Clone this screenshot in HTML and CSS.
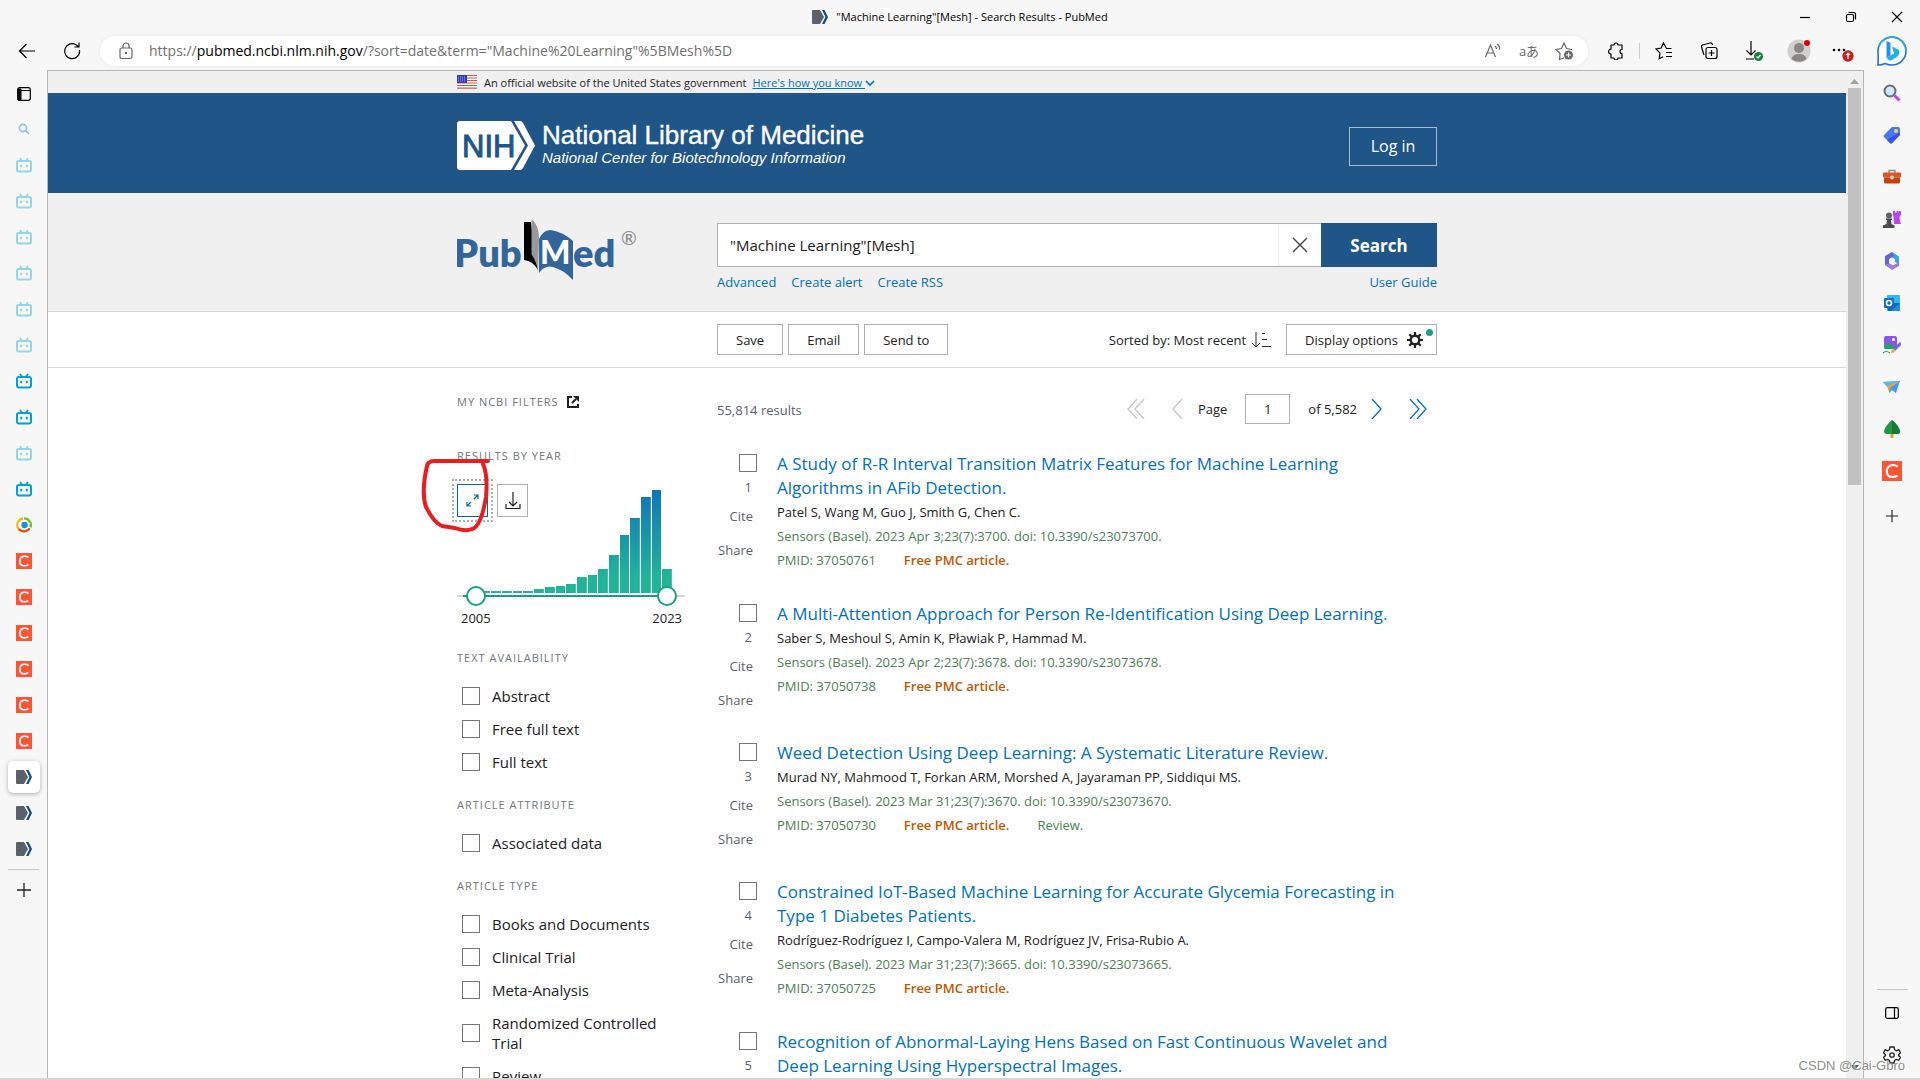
FILE: index.html
```html
<!DOCTYPE html>
<html lang="en">
  <head>
    <meta charset="UTF-8" />
    <meta name="viewport" content="width=device-width, initial-scale=1.0" />
    <title>"Machine Learning"[Mesh] - Search Results - PubMed</title>
    <link rel="stylesheet" href="styles.css">
  </head>
  <body>
    <!-- shared icons -->
    <svg class="sprite" aria-hidden="true">
      <symbol id="tv" viewBox="0 0 16 16">
        <rect x="1" y="4" width="14" height="10.5" rx="2" fill="none" stroke="currentColor" stroke-width="2" />
        <path d="M4 1l2 2.5M12 1l-2 2.5" stroke="currentColor" stroke-width="1.8" />
        <path d="M5.2 7.8v2.4M10.8 7.8v2.4" stroke="currentColor" stroke-width="2" />
      </symbol>
      <symbol id="ncbi" viewBox="0 0 16 14">
        <path d="M1 0h7l4 7-4 7H1a1 1 0 0 1-1-1V1a1 1 0 0 1 1-1z" fill="#5b616b" />
        <path d="M8.500 0h1.500l3.500 7-3.500 7H8.500l4-7z" fill="#fff" />
        <path d="M10 0h2.500L16 7l-3.500 7H10l3.500-7z" fill="#0b4d8c" />
      </symbol>
      <symbol id="csdn" viewBox="0 0 16 16">
        <rect width="16" height="16" fill="#fc5531" />
        <path d="M12.500 4.500Q11 3.200 8.800 3.200C5.500 3.200 3.800 5.500 3.800 8.200c0 2.800 1.800 4.600 4.600 4.600q2 0 4-1" fill="none" stroke="#fff" stroke-width="1.700" />
      </symbol>
      <symbol id="plus" viewBox="0 0 16 16">
        <path d="M8 1v14M1 8h14" stroke="currentColor" stroke-width="1.300" />
      </symbol>
    </svg>

    <div class="titlebar">
      <div class="window-title">
        <svg width="16" height="14"><use href="#ncbi" /></svg>
        <span>"Machine Learning"[Mesh] - Search Results - PubMed</span>
      </div>
      <div class="window-controls">
        <button aria-label="Minimize"><svg width="12" height="12" viewBox="0 0 12 12"><path d="M1 6.500h10" /></svg></button>
        <button aria-label="Restore"><svg width="12" height="12" viewBox="0 0 12 12"><rect x="1.500" y="3.500" width="7" height="7" rx="1.500" /><path d="M3.500 1.500h5a2 2 0 0 1 2 2v5" /></svg></button>
        <button aria-label="Close"><svg width="12" height="12" viewBox="0 0 12 12"><path d="M1 1l10 10M11 1L1 11" /></svg></button>
      </div>
    </div>

    <div class="toolbar">
      <button aria-label="Back"><svg width="18" height="18" viewBox="0 0 18 18"><path d="M17 9H1.500M8.500 2l-7 7 7 7" /></svg></button>
      <button aria-label="Refresh"><svg width="18" height="18" viewBox="0 0 18 18"><path d="M16.500 8A7.500 7.500 0 1 1 13 2.800l2.500 2M16 .500V5h-4.500" /></svg></button>
      <div class="address">
        <svg class="soft" width="16" height="18" viewBox="0 0 16 18"><rect x="2" y="6" width="12" height="10.500" rx="1.500" /><path d="M5 6V4a3 3 0 0 1 6 0v2" /><circle cx="8" cy="11" r=".6" /></svg>
        <span class="url">https://<b>pubmed.ncbi.nlm.nih.gov</b>/?sort=date&amp;term="Machine%20Learning"%5BMesh%5D</span>
        <button class="soft" aria-label="Read aloud"><svg width="18" height="16" viewBox="0 0 18 16"><path d="M1.500 14L6.500 2l5 12M3.200 10h6.600M11 3q1.500 1 1.500 3M13 1q3 2 2.500 5.500" /></svg></button>
        <button class="soft kana" aria-label="Translate">aあ</button>
        <button class="soft" aria-label="Add to favorites"><svg width="20" height="20" viewBox="0 0 20 20"><path d="M9 17l-4.500 1.500.600-6L1 8.500l5.500-1L9 2l2.500 5.500 5.500 1" /><circle cx="13.500" cy="14" r="4.500" fill="#666" stroke="none" /><path d="M13.500 11.500v5M11 14h5" stroke="#fff" /></svg></button>
      </div>
      <button aria-label="Extensions"><svg width="18" height="18" viewBox="0 0 18 18"><path d="M4 3h3a2 2 0 0 1 4 0h4v4.500a2 2 0 0 0 0 4V16h-4a2 2 0 0 1-4 0H4v-4a2.300 2.300 0 0 1 0-4.800z" stroke-linejoin="round" /></svg></button>
      <span class="separator"></span>
      <button aria-label="Favorites"><svg width="18" height="18" viewBox="0 0 18 18"><path d="M16.500 6.500h-5L8.500 1l-2.300 5L1 7l4 4-.800 5.800 4-2M11 10.500h6M11 14.500h6" /></svg></button>
      <button aria-label="Collections"><svg width="18" height="18" viewBox="0 0 18 18"><rect x="6" y="5.500" width="11" height="11" rx="2" /><path d="M11.500 8v6M8.500 11h6M4 13L1.500 5Q1 3.500 2.500 3L10 1q2-.500 2.500 2" /></svg></button>
      <button aria-label="Downloads"><svg width="20" height="22" viewBox="0 0 20 22"><path d="M7 1v14M2.500 10.500L7 15l4.500-4.500M2 19h8" /><circle cx="14.500" cy="16.500" r="4.500" fill="#158136" stroke="none" /><path d="M12.500 16.500l1.500 1.500 2.500-3" stroke="#fff" /></svg></button>
      <button aria-label="Profile"><svg width="24" height="24" viewBox="0 0 24 24"><circle cx="12" cy="12" r="11.500" fill="#d2d0ce" stroke="none" /><circle cx="12" cy="9" r="5" fill="#8a8683" stroke="none" /><path d="M4.500 20q1-5 7.500-5t7.500 5a11.500 11.500 0 0 1-15 0z" fill="#8a8683" stroke="none" /><circle cx="20" cy="4" r="3" fill="#e00000" stroke="none" /></svg></button>
      <button aria-label="Settings and more"><svg width="26" height="24" viewBox="0 0 26 24"><g fill="#000" stroke="none"><circle cx="3" cy="11" r="1.300" /><circle cx="8" cy="11" r="1.300" /><circle cx="13" cy="11" r="1.300" /></g><circle cx="17" cy="17" r="5.700" fill="#c42020" stroke="none" /><path d="M17 20v-6M15 16l2-2 2 2" stroke="#fff" /></svg></button>
      <button class="bing" aria-label="Discover"><svg width="32" height="32" viewBox="0 0 32 32">
        <path d="M2 30Q2.500 24 2 16A14 14 0 1 1 16 30Q12 30 9 28.500Q6 30 2 30z" fill="#fff" stroke="#2870dc" stroke-width="1.600" />
        <path d="M3 11A14 14 0 0 1 30 16" stroke="#2ba5e8" stroke-width="1.600" />
        <path d="M10.500 6l4 1.800v12.500l-4 2.500z" fill="#2b8df0" stroke="none" />
        <path d="M16 11.500l7 3.500q1.500 5-3 7.500l-5 3q-3 0-4.500-3l7.500-4z" fill="#21b0ea" stroke="none" />
      </svg></button>
    </div>

    <div class="workspace">
      <nav class="tabs" aria-label="Tabs">
        <button class="first" aria-label="Tab actions"><svg width="14" height="14" viewBox="0 0 14 14"><rect x=".7" y=".7" width="12.600" height="12.600" rx="2" fill="none" stroke="#000" stroke-width="1.200" /><path d="M1 2h3v11H1zM1 3.500h12" stroke="#000" /></svg></button>
        <button aria-label="Search tab"><svg width="12" height="12" viewBox="0 0 12 12" fill="none" stroke="#8fbfe2" stroke-width="1.600"><circle cx="5" cy="5" r="3.600" /><path d="M7.600 7.600L11 11" /></svg></button>
        <button class="tv pale" aria-label="Video"><svg width="16" height="16"><use href="#tv" /></svg></button>
        <button class="tv pale" aria-label="Video"><svg width="16" height="16"><use href="#tv" /></svg></button>
        <button class="tv pale" aria-label="Video"><svg width="16" height="16"><use href="#tv" /></svg></button>
        <button class="tv pale" aria-label="Video"><svg width="16" height="16"><use href="#tv" /></svg></button>
        <button class="tv pale" aria-label="Video"><svg width="16" height="16"><use href="#tv" /></svg></button>
        <button class="tv pale" aria-label="Video"><svg width="16" height="16"><use href="#tv" /></svg></button>
        <button class="tv" aria-label="Video"><svg width="16" height="16"><use href="#tv" /></svg></button>
        <button class="tv" aria-label="Video"><svg width="16" height="16"><use href="#tv" /></svg></button>
        <button class="tv pale" aria-label="Video"><svg width="16" height="16"><use href="#tv" /></svg></button>
        <button class="tv" aria-label="Video"><svg width="16" height="16"><use href="#tv" /></svg></button>
        <button aria-label="Browser page"><svg width="16" height="16" viewBox="0 0 16 16" fill="none" stroke-width="2.200"><circle cx="8" cy="8" r="7" fill="#fff" /><path d="M3 12.500A6.800 6.800 0 0 1 7 1.300" stroke="#fbb40c" /><path d="M8 1.300a6.800 6.800 0 0 1 6.500 9" stroke="#6fbe1e" /><path d="M2.500 12.200q6 4.500 11.500-.700" stroke="#f4430d" /><circle cx="8.500" cy="8" r="3.200" fill="#1e8fe0" /></svg></button>
        <button aria-label="CSDN"><svg width="16" height="16"><use href="#csdn" /></svg></button>
        <button aria-label="CSDN"><svg width="16" height="16"><use href="#csdn" /></svg></button>
        <button aria-label="CSDN"><svg width="16" height="16"><use href="#csdn" /></svg></button>
        <button aria-label="CSDN"><svg width="16" height="16"><use href="#csdn" /></svg></button>
        <button aria-label="CSDN"><svg width="16" height="16"><use href="#csdn" /></svg></button>
        <button aria-label="CSDN"><svg width="16" height="16"><use href="#csdn" /></svg></button>
        <button class="active" aria-label="PubMed"><svg width="16" height="14"><use href="#ncbi" /></svg></button>
        <button aria-label="PubMed"><svg width="16" height="14"><use href="#ncbi" /></svg></button>
        <button aria-label="PubMed"><svg width="16" height="14"><use href="#ncbi" /></svg></button>
        <span class="rule"></span>
        <button aria-label="New tab"><svg width="16" height="16"><use href="#plus" /></svg></button>
      </nav>

      <div class="page">
        <div class="gov-banner">
          <div class="container">
            <svg width="20" height="14" viewBox="0 0 20 14"><rect width="20" height="14" fill="#fff" /><path d="M0 .500h20M0 3h20M0 5.500h20M0 8h20M0 10.500h20M0 13.200h20" stroke="#e0523f" stroke-width="1.200" /><rect width="10" height="8" fill="#2a3bb5" /><path d="M1 2h8M1 4h8M1 6h8" stroke="#aab3ea" stroke-dasharray="1 1" /></svg>
            <span>An official website of the United States government</span>
            <a href="#">Here's how you know <svg width="10" height="7" viewBox="0 0 10 7"><path d="M1 1l4 4 4-4" fill="none" stroke="#0071bc" stroke-width="1.600" /></svg></a>
          </div>
        </div>

        <header class="nlm">
          <div class="container">
            <a class="nlm-logo" href="#">
              <svg width="78" height="49" viewBox="0 0 78 49">
                <path d="M3 0h51l14 24.500L54 49H3a3 3 0 0 1-3-3V3a3 3 0 0 1 3-3z" fill="#fff" />
                <path d="M57 0h6q2 0 3 2l12 22.500L66 47q-1 2-3 2h-6l14-24.500z" fill="#fff" />
                <text x="5" y="36">NIH</text>
              </svg>
              <span>
                <strong>National Library of Medicine</strong>
                <em>National Center for Biotechnology Information</em>
              </span>
            </a>
            <button class="login">Log in</button>
          </div>
        </header>

        <section class="search">
          <div class="container">
            <a class="pubmed-logo" href="#" aria-label="PubMed">
              <svg width="182" height="62" viewBox="0 0 182 62">
                <path d="M67 3h7l4 34 3 14q-5-9-14-10z" fill="#000" />
                <path d="M74.500 0Q82 6 82 19l-1 36q0-10-6.500-20z" fill="#999" />
                <path d="M82 20q4-9 12-9 12 2 22 11v39q-9-10-20-13-8-2-14 6z" fill="#326599" />
                <text class="word" x="-3" y="48">Pub</text>
                <text class="word" x="116" y="48">ed</text>
                <text class="m" x="83" y="45">M</text>
                <text class="reg" x="164" y="26">®</text>
              </svg>
            </a>
            <form class="search-form">
              <div class="search-row">
                <input type="text" aria-label="Search term" value="&quot;Machine Learning&quot;[Mesh]">
                <button type="button" class="clear" aria-label="Clear"><svg width="18" height="18" viewBox="0 0 18 18"><path d="M2 2l14 14M16 2L2 16" stroke="#444" stroke-width="1.400" /></svg></button>
                <button type="button" class="submit">Search</button>
              </div>
              <div class="search-links">
                <a href="#">Advanced</a>
                <a href="#">Create alert</a>
                <a href="#">Create RSS</a>
                <a class="guide" href="#">User Guide</a>
              </div>
            </form>
          </div>
        </section>

        <section class="actions">
          <div class="container">
            <button>Save</button>
            <button>Email</button>
            <button>Send to</button>
            <span class="sorted">Sorted by: Most recent
              <svg width="20" height="18" viewBox="0 0 20 18" fill="none" stroke="#333"><path d="M5 1v15M1 12l4 4 4-4M11 2.500h3M11 8.500h5M11 15.500h9" /></svg>
            </span>
            <button class="display">Display options
              <svg width="16" height="16" viewBox="0 0 16 16"><circle cx="8" cy="8" r="4.300" fill="none" stroke="#212121" stroke-width="2.400" /><path d="M8 0v4M8 12v4M0 8h4M12 8h4M2.300 2.300l2.800 2.800M10.900 10.900l2.800 2.800M2.300 13.700l2.800-2.800M10.900 5.100l2.800-2.800" stroke="#212121" stroke-width="2.200" /></svg>
              <i class="dot"></i>
            </button>
          </div>
        </section>

        <main class="container content">
          <aside>
            <h3 class="my-filters">My NCBI Filters <svg width="12" height="12" viewBox="0 0 12 12" fill="none" stroke="#212121" stroke-width="2"><path d="M5 1H1v10h10V8" /><path d="M5 7l4-4" /><path d="M6 0h6v6z" fill="#212121" stroke="none" /></svg></h3>

            <h3>Results by year</h3>
            <div class="timeline">
              <div class="chart">
                <div class="bars">
                  <i style="height:2px"></i>
                  <i style="height:2px"></i>
                  <i style="height:2px"></i>
                  <i style="height:2px"></i>
                  <i style="height:2px"></i>
                  <i style="height:2px"></i>
                  <i style="height:4px"></i>
                  <i style="height:6px"></i>
                  <i style="height:7px"></i>
                  <i style="height:9px"></i>
                  <i style="height:16px"></i>
                  <i style="height:18px"></i>
                  <i style="height:24px"></i>
                  <i style="height:38px"></i>
                  <i style="height:58px"></i>
                  <i style="height:75px"></i>
                  <i style="height:96px"></i>
                  <i style="height:103px"></i>
                  <i style="height:24px"></i>
                </div>
                <div class="chart-buttons">
                  <button class="expand" aria-label="Expand chart"><svg width="13" height="13" viewBox="0 0 13 13"><path d="M8 1h4v4M12 1L8 5M1 8v4h4M1 12l4-4" /></svg></button>
                  <button aria-label="Download CSV"><svg width="16" height="18" viewBox="0 0 16 18"><path d="M8 0v14M4 10l4 4 4-4M1 12v4.500h14V12" /></svg></button>
                </div>
              </div>
              <div class="slider">
                <input type="range" min="2005" max="2023" value="2005" aria-label="From year">
                <input type="range" min="2005" max="2023" value="2023" aria-label="To year">
              </div>
              <div class="years"><span>2005</span><span>2023</span></div>
              <svg class="scribble" width="76" height="84" viewBox="0 0 76 84"><path d="M71 10H17Q11 10 10 15Q4 42 9 56Q17 72 25 75L38 77Q48 81 55 78Q64 76 69 46Q71 24 66 13" /></svg>
            </div>

            <h3>Text availability</h3>
            <label><input type="checkbox"> Abstract</label>
            <label><input type="checkbox"> Free full text</label>
            <label><input type="checkbox"> Full text</label>

            <h3>Article attribute</h3>
            <label><input type="checkbox"> Associated data</label>

            <h3>Article type</h3>
            <label><input type="checkbox"> Books and Documents</label>
            <label><input type="checkbox"> Clinical Trial</label>
            <label><input type="checkbox"> Meta-Analysis</label>
            <label><input type="checkbox"> Randomized Controlled Trial</label>
            <label><input type="checkbox"> Review</label>
          </aside>

          <div class="results">
            <div class="results-top">
              <span class="count">55,814 results</span>
              <div class="pager">
                <button class="off" aria-label="First page" disabled><svg width="18" height="20" viewBox="0 0 18 20"><path d="M10 0L1 10l9 10M17 0L8 10l9 10" /></svg></button>
                <button class="off prev" aria-label="Previous page" disabled><svg width="12" height="20" viewBox="0 0 12 20"><path d="M11 0L2 10l9 10" /></svg></button>
                <label for="page-number">Page</label>
                <input id="page-number" type="text" value="1">
                <span>of 5,582</span>
                <button aria-label="Next page"><svg width="12" height="20" viewBox="0 0 12 20"><path d="M1 0l9 10-9 10" /></svg></button>
                <button class="last" aria-label="Last page"><svg width="18" height="20" viewBox="0 0 18 20"><path d="M1 0l9 10-9 10M8 0l9 10-9 10" /></svg></button>
              </div>
            </div>

            <article>
              <div class="tools">
                <input type="checkbox" aria-label="Select result 1">
                <span class="num">1</span>
                <button>Cite</button>
                <button>Share</button>
              </div>
              <div class="citation">
                <a class="title" href="#">A Study of R-R Interval Transition Matrix Features for Machine Learning Algorithms in AFib Detection.</a>
                <p class="authors">Patel S, Wang M, Guo J, Smith G, Chen C.</p>
                <p>Sensors (Basel). 2023 Apr 3;23(7):3700. doi: 10.3390/s23073700.</p>
                <p class="meta"><span>PMID: 37050761</span><b>Free PMC article.</b></p>
              </div>
            </article>

            <article>
              <div class="tools">
                <input type="checkbox" aria-label="Select result 2">
                <span class="num">2</span>
                <button>Cite</button>
                <button>Share</button>
              </div>
              <div class="citation">
                <a class="title" href="#">A Multi-Attention Approach for Person Re-Identification Using Deep Learning.</a>
                <p class="authors">Saber S, Meshoul S, Amin K, Pławiak P, Hammad M.</p>
                <p>Sensors (Basel). 2023 Apr 2;23(7):3678. doi: 10.3390/s23073678.</p>
                <p class="meta"><span>PMID: 37050738</span><b>Free PMC article.</b></p>
              </div>
            </article>

            <article>
              <div class="tools">
                <input type="checkbox" aria-label="Select result 3">
                <span class="num">3</span>
                <button>Cite</button>
                <button>Share</button>
              </div>
              <div class="citation">
                <a class="title" href="#">Weed Detection Using Deep Learning: A Systematic Literature Review.</a>
                <p class="authors">Murad NY, Mahmood T, Forkan ARM, Morshed A, Jayaraman PP, Siddiqui MS.</p>
                <p>Sensors (Basel). 2023 Mar 31;23(7):3670. doi: 10.3390/s23073670.</p>
                <p class="meta"><span>PMID: 37050730</span><b>Free PMC article.</b><span>Review.</span></p>
              </div>
            </article>

            <article>
              <div class="tools">
                <input type="checkbox" aria-label="Select result 4">
                <span class="num">4</span>
                <button>Cite</button>
                <button>Share</button>
              </div>
              <div class="citation">
                <a class="title" href="#">Constrained IoT-Based Machine Learning for Accurate Glycemia Forecasting in Type 1 Diabetes Patients.</a>
                <p class="authors">Rodríguez-Rodríguez I, Campo-Valera M, Rodríguez JV, Frisa-Rubio A.</p>
                <p>Sensors (Basel). 2023 Mar 31;23(7):3665. doi: 10.3390/s23073665.</p>
                <p class="meta"><span>PMID: 37050725</span><b>Free PMC article.</b></p>
              </div>
            </article>

            <article>
              <div class="tools">
                <input type="checkbox" aria-label="Select result 5">
                <span class="num">5</span>
              </div>
              <div class="citation">
                <a class="title" href="#">Recognition of Abnormal-Laying Hens Based on Fast Continuous Wavelet and Deep Learning Using Hyperspectral Images.</a>
              </div>
            </article>
          </div>
        </main>
      </div>

      <div class="scrollbar">
        <svg width="9" height="6" viewBox="0 0 9 6"><path d="M0 6l4.500-5L9 6z" fill="#a3a3a3" /></svg>
        <span class="thumb"></span>
        <svg class="down" width="9" height="6" viewBox="0 0 9 6"><path d="M0 0l4.500 5L9 0z" fill="#505050" /></svg>
      </div>

      <nav class="edge-bar" aria-label="Sidebar">
        <button aria-label="Search"><svg width="18" height="18" viewBox="0 0 18 18"><circle cx="7" cy="7" r="5.500" fill="#cfeafc" stroke="#6a6a6a" stroke-width="2" /><path d="M11.500 11.500l5 5" stroke="#c13df0" stroke-width="3" /></svg></button>
        <button aria-label="Shopping"><svg width="18" height="18" viewBox="0 0 18 18"><path d="M9 1h6q2 0 2 2v6L9 17q-1 1-2 0l-6-6q-1-1 0-2z" fill="#4a78f5" /><path d="M17 6v3L9 17q-1 1-2 0l-3-3z" fill="#3a4ff0" /><circle cx="13" cy="5" r="2" fill="#ffd43a" /></svg></button>
        <button aria-label="Tools"><svg width="18" height="18" viewBox="0 0 18 18"><path d="M6 5V2.500h6V5" fill="none" stroke="#8c8c8c" stroke-width="1.400" /><rect y="4.500" width="18" height="5" rx="1" fill="#e0561d" /><path d="M1 9.500h16V14q0 1.500-1.500 1.500h-13Q1 15.500 1 14z" fill="#c4400f" /><circle cx="9" cy="9.500" r="2" fill="#cfcfcf" /></svg></button>
        <button aria-label="Games"><svg width="18" height="18" viewBox="0 0 18 18"><path d="M10 1h2v1.500h1.500V1h2v1.500H16V1h2v4l-1.500 1.500.500 5 1 2.500h-7l-.500-7L10 5z" fill="#b844f5" /><circle cx="6" cy="5.500" r="3" fill="#626262" /><path d="M3 8.500h6v1.500H8l.500 4 3 1.500V18H0v-2.500L3.500 14l.500-4H3z" fill="#4c4c4c" /></svg></button>
        <button aria-label="Microsoft 365"><svg width="18" height="18" viewBox="0 0 18 18"><path d="M9 0l7 4.500V12l-4-2V7L7 4.500z" fill="#36a6ea" /><path d="M9 0L2 4v9l4 1V7l5-3z" fill="#5f68d8" /><path d="M2 13l7 5 7-4v-4l-6 3.500L6 11z" fill="#a476dc" /></svg></button>
        <button aria-label="Outlook"><svg width="18" height="18" viewBox="0 0 18 18"><rect x="4" y="1" width="13" height="16" rx="1" fill="#33b5f0" /><path d="M4 9h13v8H5z" fill="#1068b8" /><path d="M17 9v8H8z" fill="#1e8fdf" /><rect x="1" y="4" width="10" height="10" rx="1" fill="#0d6cc4" /><circle cx="6" cy="9" r="2.500" fill="none" stroke="#fff" stroke-width="1.600" /></svg></button>
        <button aria-label="Image creator"><svg width="18" height="18" viewBox="0 0 18 18"><rect x="1" width="13" height="13" rx="2" fill="#8a56ee" /><path d="M1 11l4-4q1-1 2 0l6 6H3q-2 0-2-2z" fill="#1da368" /><circle cx="10.500" cy="3.500" r="1.500" fill="#fff" /><path d="M18 7l-7 7" stroke="#5f6ee8" stroke-width="3" /><path d="M8 17q0-4 3-4l1 1q0 3-4 3z" fill="#f7a823" /><path d="M0 17q3-3 7 0" stroke="#1da368" stroke-width="1.200" fill="none" /></svg></button>
        <button aria-label="Drop"><svg width="18" height="18" viewBox="0 0 18 18"><path d="M0 4l17-1-4 12-4-3-3 3V9z" fill="#3f9df2" /><path d="M0 4l17-1L5 10z" fill="#53b9f7" /><path d="M17 3L4 8l2 6 1-4z" fill="#f0a52a" /></svg></button>
        <button aria-label="E-tree"><svg width="18" height="18" viewBox="0 0 18 18"><rect x="7.500" y="13" width="3" height="5" fill="#e89a2c" /><path d="M9 0q7 6 8 11 0 3-3 3H4q-3 0-3-3Q2 6 9 0z" fill="#239546" /><path d="M9 0q7 6 8 11 0 3-3 3H9z" fill="#157a36" /></svg></button>
        <button aria-label="CSDN"><svg width="20" height="20"><use href="#csdn" /></svg></button>
        <button class="add" aria-label="Add site"><svg width="14" height="14"><use href="#plus" /></svg></button>
        <span class="rule bottom"></span>
        <button class="panel" aria-label="Hide sidebar"><svg width="14" height="12" viewBox="0 0 14 12" fill="none" stroke="#000" stroke-width="1.200"><rect x=".7" y=".7" width="12.600" height="10.600" rx="1.500" /><path d="M9.500 1v10" /></svg></button>
        <button aria-label="Settings"><svg width="18" height="18" viewBox="0 0 18 18" fill="none" stroke="#222" stroke-width="1.300"><path d="M7 1h4l.600 2.700 1.700 1 2.600-.900 1.600 3L15.600 8.600v1l1.900 1.700-1.800 3-2.500-.800-1.600.900L11 17H7l-.600-2.600-1.600-.900-2.500.800-1.800-3 1.900-1.700v-1L.500 6.800l1.600-3 2.600.900 1.700-1z" /><circle cx="9" cy="9" r="2.200" /></svg></button>
      </nav>
    </div>
    <div class="watermark">CSDN @Cai-Gbro</div>
  </body>
</html>
```
FILE: styles.css
```css
* {
  box-sizing: border-box;
}
body {
  margin: 0;
  height: 100vh;
  display: flex;
  flex-direction: column;
  overflow: hidden;
  background-color: #f7f7f7;
  border-bottom: 2px solid #d6d6d6;
  font-family: "Open Sans", "Noto Sans CJK JP", sans-serif;
  font-size: 13px;
  color: #212121;
}
a {
  color: #0071bc;
  text-decoration: none;
}
button {
  display: flex;
  align-items: center;
  justify-content: center;
  padding: 0;
  border: none;
  background: none;
  color: inherit;
  font: inherit;
}
p,
h3 {
  margin: 0;
}
.sprite {
  position: absolute;
  width: 0;
  height: 0;
}

/* Browser window */
.titlebar {
  display: grid;
  grid-template-columns: 1fr auto 1fr;
  align-items: center;
  height: 33px;
  flex: none;
  font-size: 11px;
  color: #000;
}
.window-title {
  grid-column: 2;
  display: flex;
  align-items: center;
  gap: 8px;
}
.window-controls {
  display: flex;
  justify-content: flex-end;
}
.window-controls button {
  width: 46px;
  height: 32px;
}
.window-controls svg,
.toolbar svg {
  fill: none;
  stroke: currentColor;
  stroke-width: 1.2;
}
.toolbar {
  display: flex;
  align-items: center;
  height: 37px;
  flex: none;
  padding: 0 12px 2px 4px;
  color: #000;
}
.toolbar > button {
  width: 45px;
  height: 36px;
}
.address {
  display: flex;
  align-items: center;
  flex: 1;
  height: 30px;
  margin: 0 5px 0 6px;
  padding: 0 5px 0 18px;
  border-radius: 15px;
  background-color: #fff;
  box-shadow: 0 0 4px rgba(0, 0, 0, 0.08);
}
.url {
  flex: 1;
  margin-left: 15px;
  font-size: 14px;
  color: #707070;
}
.url b {
  font-weight: normal;
  color: #000;
}
.address button {
  width: 36px;
}
.soft {
  color: #666;
}
.separator {
  width: 1px;
  height: 16px;
  margin: 0 1px;
  background-color: #cfcfcf;
}
.toolbar .bing {
  width: 32px;
  margin-left: 10px;
}
.workspace {
  display: flex;
  flex: 1;
  min-height: 0;
}
.tabs {
  display: flex;
  flex-direction: column;
  align-items: center;
  width: 47px;
  flex: none;
  padding-top: 7px;
}
.tabs button {
  width: 32px;
  height: 36px;
  flex: none;
}
.tabs .first {
  height: 34px;
}
.tabs .active {
  height: 32px;
  margin: 2px 0;
  border-radius: 5px;
  background-color: #fff;
  box-shadow: 0 1px 4px rgba(0, 0, 0, 0.3);
}
.tv {
  color: #00a1d6;
}
.pale {
  color: #93d5ea;
}
.rule {
  width: 31px;
  height: 1px;
  flex: none;
  margin: 2px 0;
  background-color: #c6c6c6;
}
.edge-bar {
  display: flex;
  flex-direction: column;
  align-items: center;
  width: 56px;
  flex: none;
  padding: 2px 0;
}
.edge-bar button {
  width: 42px;
  height: 42px;
}
.edge-bar .add {
  height: 48px;
}
.edge-bar .bottom {
  margin-top: auto;
}
.scrollbar {
  display: flex;
  flex-direction: column;
  align-items: center;
  width: 18px;
  flex: none;
  padding: 7px 0;
  border-top: 1px solid #b5b5b5;
  border-right: 1px solid #b5b5b5;
  background-color: #f0f0f0;
}
.thumb {
  width: 13px;
  height: 40%;
  margin-top: 4px;
  background-color: #c1c1c1;
}
.down {
  margin-top: auto;
}

/* PubMed page */
.page {
  flex: 1;
  overflow: hidden;
  border-top: 1px solid #b5b5b5;
  border-left: 1px solid #b5b5b5;
  background-color: #fff;
}
.container {
  display: flex;
  align-items: center;
  width: 980px;
  max-width: 100%;
  margin: 0 auto;
}
.gov-banner {
  background-color: #f0f0f0;
  font-size: 11px;
}
.gov-banner .container {
  height: 22px;
}
.gov-banner span {
  margin: 0 6px 0 7px;
}
.gov-banner a {
  text-decoration: underline;
}
.nlm {
  background-color: #205588;
  color: #fff;
}
.nlm .container {
  height: 100px;
  justify-content: space-between;
}
.nlm-logo {
  display: flex;
  align-items: center;
  gap: 7px;
  margin-top: 4px;
  color: #fff;
  font-family: "Liberation Sans", sans-serif;
}
.nlm-logo text {
  font-size: 31px;
  fill: #205588;
  stroke: #205588;
}
.nlm-logo strong,
.nlm-logo em {
  display: block;
}
.nlm-logo strong {
  font-size: 26px;
  font-weight: normal;
  line-height: 26px;
  -webkit-text-stroke: 0.4px #fff;
}
.nlm-logo em {
  font-size: 15px;
  line-height: 20px;
}
.login {
  width: 88px;
  height: 39px;
  margin-top: 6px;
  border: 1px solid #a6bbcf;
  font-size: 16px;
}
.search {
  background-color: #f0f0f0;
  border-bottom: 1px solid #d6d7d9;
}
.search .container {
  height: 118px;
  align-items: flex-start;
}
.pubmed-logo {
  width: 260px;
  padding-top: 26px;
}
.pubmed-logo text {
  font-family: Lato, sans-serif;
  font-weight: 800;
}
.word {
  font-size: 38px;
  fill: #326599;
}
.pubmed-logo .m {
  font-size: 32px;
  font-weight: 900;
  fill: #fff;
}
.pubmed-logo .reg {
  font-size: 19px;
  font-weight: 600;
  fill: #929292;
}
.search-form {
  flex: 1;
  padding-top: 30px;
}
.search-row {
  display: flex;
  height: 44px;
}
.search-row input {
  flex: 1;
  padding: 0 12px;
  border: 1px solid #aeb0b5;
  border-right: none;
  font: inherit;
  font-size: 15px;
  color: #212121;
}
.clear {
  width: 43px;
  border: 1px solid #aeb0b5;
  border-width: 1px 0;
  background-color: #fff;
  box-shadow: inset 1px 0 2px #eee;
}
.submit {
  width: 116px;
  background-color: #205588;
  color: #fff;
  font-size: 17px;
  font-weight: bold;
}
.search-links {
  display: flex;
  gap: 15px;
  margin-top: 5px;
  line-height: 20px;
}
.guide {
  margin-left: auto;
}
.actions {
  border-bottom: 1px solid #d6d7d9;
}
.actions .container {
  height: 55px;
  gap: 5px;
  padding-left: 260px;
}
.actions button {
  height: 31px;
  padding: 0 18px;
  border: 1px solid #aeb0b5;
}
.sorted {
  display: flex;
  align-items: center;
  gap: 5px;
  margin-left: auto;
}
.actions .display {
  position: relative;
  gap: 9px;
  margin-left: 10px;
  padding: 0 13px 0 18px;
}
.dot {
  position: absolute;
  top: 4px;
  right: 3px;
  width: 7px;
  height: 7px;
  border-radius: 50%;
  background-color: #18a085;
}
.content {
  align-items: flex-start;
}
input[type="checkbox"] {
  appearance: none;
  width: 18px;
  height: 18px;
  flex: none;
  margin: 0;
  border: 1px solid #71767a;
  background-color: #fff;
}

/* Filters */
aside {
  width: 228px;
  margin-right: 32px;
  padding-top: 24px;
}
h3 {
  margin-bottom: 12px;
  font-size: 11px;
  font-weight: normal;
  line-height: 20px;
  letter-spacing: 1px;
  text-transform: uppercase;
  color: #71767a;
}
.my-filters {
  display: flex;
  align-items: center;
  gap: 8px;
  margin-bottom: 34px;
}
aside label {
  display: flex;
  align-items: center;
  gap: 12px;
  padding: 6px 16px 7px 5px;
  font-size: 15px;
  line-height: 20px;
}
label + h3 {
  margin-top: 16px;
}
.timeline {
  position: relative;
  margin: 18px 0 20px;
}
.chart {
  display: grid;
  height: 110px;
}
.bars,
.chart-buttons {
  grid-area: 1 / 1;
}
.bars {
  display: flex;
  align-items: flex-end;
  gap: 1px;
  padding: 0 13px 1px;
}
.bars i {
  flex: 1;
  background: linear-gradient(#1073ba, #20b598 85%) bottom / 100% 104px;
}
.chart-buttons {
  display: flex;
  align-items: flex-start;
  gap: 9px;
}
.chart-buttons button {
  width: 31px;
  height: 33px;
  border: 1px solid #aeb0b5;
}
.chart-buttons svg {
  fill: none;
  stroke: #212121;
  stroke-width: 1.2;
}
.chart-buttons .expand {
  border-color: #046b99;
  outline: 2px dotted #aeb0b5;
  outline-offset: 3px;
}
.chart-buttons .expand svg {
  stroke: #046b99;
}
.slider {
  position: relative;
  height: 4px;
  background: linear-gradient(90deg, #d6d7d9 6px, #18a085 6px, #18a085 210px, #d6d7d9 210px) center / 100% 2px no-repeat;
}
.slider input {
  position: absolute;
  top: -8px;
  left: 9px;
  width: 211px;
  height: 20px;
  margin: 0;
  appearance: none;
  background: none;
  pointer-events: none;
}
.slider input::-webkit-slider-thumb {
  appearance: none;
  width: 20px;
  height: 20px;
  border: 2px solid #18a085;
  border-radius: 50%;
  background-color: #fff;
  pointer-events: auto;
}
.years {
  display: flex;
  justify-content: space-between;
  margin-top: 10px;
  padding: 0 3px 0 4px;
  line-height: 20px;
}
/* hand-drawn mark round the expand button */
.scribble {
  position: absolute;
  top: -33px;
  left: -40px;
  fill: none;
  stroke: #e81e1e;
  stroke-width: 4;
  stroke-linecap: round;
  stroke-linejoin: round;
}

/* Results */
.results {
  flex: 1;
  min-width: 0;
}
.results-top,
.pager {
  display: flex;
  align-items: center;
}
.results-top {
  height: 84px;
  justify-content: space-between;
}
.count {
  color: #5b616b;
}
.pager {
  padding: 0 10px 2px 0;
}
.pager svg {
  fill: none;
  stroke: #0071bc;
  stroke-width: 1.3;
}
.pager .off svg {
  stroke: #c4c6c9;
}
.pager .prev {
  margin: 0 15px 0 26px;
}
.pager input {
  width: 45px;
  height: 30px;
  margin: 0 18px;
  border: 1px solid #aeb0b5;
  font: inherit;
  color: inherit;
  text-align: center;
}
.pager span {
  margin-right: 14px;
}
.pager .last {
  margin-left: 26px;
}
article {
  display: flex;
  min-height: 109px;
  margin-bottom: 30px;
}
.tools {
  display: flex;
  flex-direction: column;
  align-items: flex-end;
  width: 40px;
  flex: none;
  margin-right: 20px;
  padding-top: 2px;
  line-height: 20px;
  color: #5b616b;
}
.tools .num {
  margin: 5px 5px 0 0;
}
.tools button {
  margin: 9px 4px 5px 0;
}
.tools button + button {
  margin-bottom: 0;
}
.citation {
  flex: 1;
  padding-right: 30px;
  line-height: 24px;
  color: #4d8055;
}
.title {
  display: block;
  font-size: 17px;
}
.authors {
  color: #212121;
}
.meta {
  display: flex;
  gap: 28px;
}
.meta b {
  font-weight: 600;
  color: #c05600;
}
.watermark {
  position: absolute;
  right: 15px;
  bottom: 7px;
  font-family: "Liberation Sans", sans-serif;
  font-size: 13px;
  color: #8e8e8e;
  text-shadow: 1px 1px 1px #fff;
}
```
